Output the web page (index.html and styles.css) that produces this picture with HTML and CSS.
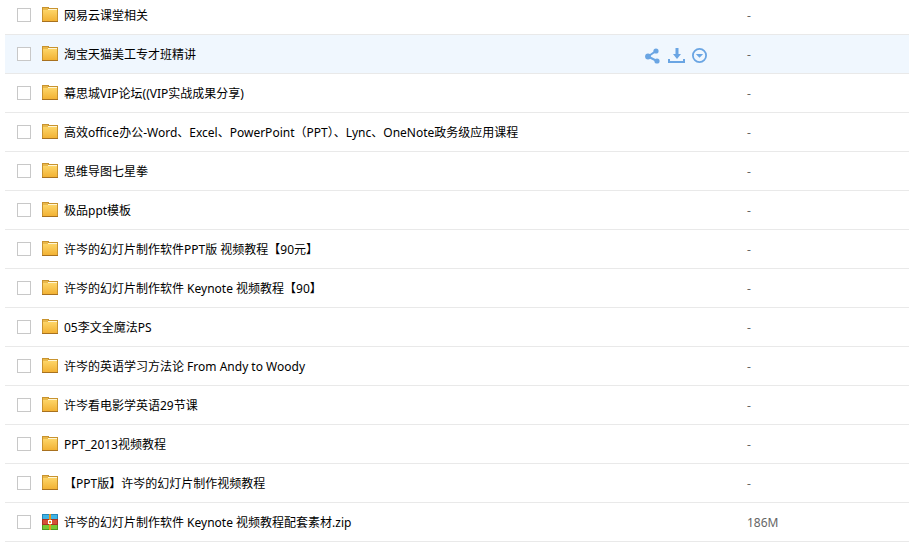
FILE: index.html
```html
<!DOCTYPE html>
<html lang="zh-CN">
<head>
<meta charset="utf-8">
<title>文件列表</title>
<link rel="stylesheet" href="styles.css">
</head>
<body>
<svg class="defs" aria-hidden="true">
  <defs>
    <linearGradient id="folder-fill" x1="0" y1="0" x2="0" y2="1">
      <stop offset="0" stop-color="#fdd567"/>
      <stop offset="1" stop-color="#f2b234"/>
    </linearGradient>
    <symbol id="folder" viewBox="0 0 16 16">
      <path d="M0 0H7V1H16V15H0Z" fill="#c8932f"/>
      <path d="M1 1H6V3H1Z" fill="#e9b84a"/>
      <path d="M6 2H15V3H6Z" fill="#fff6d4"/>
      <path d="M1 3H15V14H1Z" fill="url(#folder-fill)"/>
      <path d="M0 14H16V15H0Z" fill="#a8711f"/>
    </symbol>
    <symbol id="zip" viewBox="0 0 16 16">
      <path d="M0 0H16V5H0Z" fill="#2585b8"/>
      <path d="M1 1H15V5H1Z" fill="#3fb4e6"/>
      <path d="M0 5H16V11H0Z" fill="#a83420"/>
      <path d="M1 6H15V10H1Z" fill="#d64f35"/>
      <path d="M0 11H16V16H0Z" fill="#4e9a1c"/>
      <path d="M1 11H15V15H1Z" fill="#78c832"/>
      <path d="M7 0H9V16H7Z" fill="#e8961c"/>
      <path d="M6 6H10V10H6Z" fill="#fff"/>
      <path d="M7 7H9V9H7Z" fill="#e8961c"/>
    </symbol>
  </defs>
</svg>
<table class="files">
  <colgroup><col><col class="size-col"></colgroup>
  <tbody>
    <tr><td><div class="entry"><input type="checkbox" id="f1"><svg class="icon"><use href="#folder"/></svg><label for="f1">网易云课堂相关</label></div></td><td class="size">-</td></tr>
    <tr class="active"><td><div class="entry"><input type="checkbox" id="f2"><svg class="icon"><use href="#folder"/></svg><label for="f2">淘宝天猫美工专才班精讲</label>
      <div class="actions">
        <button type="button" aria-label="分享"><svg width="17" height="16" viewBox="0 0 17 16"><path d="M11 3L3 8.500L12 13" fill="none" stroke="#6aa5e3" stroke-width="2"/><g fill="#6aa5e3"><circle cx="11" cy="3" r="2.600"/><circle cx="3" cy="8.500" r="2.900"/><circle cx="12" cy="13" r="2.600"/></g></svg></button>
        <button type="button" aria-label="下载"><svg width="18" height="16" viewBox="0 0 18 16"><path d="M7.500 0H10.500V6H13L9 11L5 6H7.500Z" fill="#6aa5e3"/><path d="M1 11V14H16V11" fill="none" stroke="#6aa5e3" stroke-width="2"/></svg></button>
        <button type="button" aria-label="更多"><svg width="16" height="16" viewBox="0 0 16 16"><circle cx="7.500" cy="7.500" r="6.600" fill="none" stroke="#6aa5e3" stroke-width="1.800"/><path d="M3.800 6H11.200L7.500 9.700Z" fill="#6aa5e3"/></svg></button>
      </div></div></td><td class="size">-</td></tr>
    <tr><td><div class="entry"><input type="checkbox" id="f3"><svg class="icon"><use href="#folder"/></svg><label for="f3">幕思城VIP论坛((VIP实战成果分享)</label></div></td><td class="size">-</td></tr>
    <tr><td><div class="entry"><input type="checkbox" id="f4"><svg class="icon"><use href="#folder"/></svg><label for="f4">高效office办公-Word、Excel、PowerPoint（PPT）、Lync、OneNote政务级应用课程</label></div></td><td class="size">-</td></tr>
    <tr><td><div class="entry"><input type="checkbox" id="f5"><svg class="icon"><use href="#folder"/></svg><label for="f5">思维导图七星拳</label></div></td><td class="size">-</td></tr>
    <tr><td><div class="entry"><input type="checkbox" id="f6"><svg class="icon"><use href="#folder"/></svg><label for="f6">极品ppt模板</label></div></td><td class="size">-</td></tr>
    <tr><td><div class="entry"><input type="checkbox" id="f7"><svg class="icon"><use href="#folder"/></svg><label for="f7">许岑的幻灯片制作软件PPT版 视频教程【90元】</label></div></td><td class="size">-</td></tr>
    <tr><td><div class="entry"><input type="checkbox" id="f8"><svg class="icon"><use href="#folder"/></svg><label for="f8">许岑的幻灯片制作软件 Keynote 视频教程【90】</label></div></td><td class="size">-</td></tr>
    <tr><td><div class="entry"><input type="checkbox" id="f9"><svg class="icon"><use href="#folder"/></svg><label for="f9">05李文全魔法PS</label></div></td><td class="size">-</td></tr>
    <tr><td><div class="entry"><input type="checkbox" id="f10"><svg class="icon"><use href="#folder"/></svg><label for="f10">许岑的英语学习方法论 From Andy to Woody</label></div></td><td class="size">-</td></tr>
    <tr><td><div class="entry"><input type="checkbox" id="f11"><svg class="icon"><use href="#folder"/></svg><label for="f11">许岑看电影学英语29节课</label></div></td><td class="size">-</td></tr>
    <tr><td><div class="entry"><input type="checkbox" id="f12"><svg class="icon"><use href="#folder"/></svg><label for="f12">PPT_2013视频教程</label></div></td><td class="size">-</td></tr>
    <tr><td><div class="entry"><input type="checkbox" id="f13"><svg class="icon"><use href="#folder"/></svg><label for="f13">【PPT版】许岑的幻灯片制作视频教程</label></div></td><td class="size">-</td></tr>
    <tr><td><div class="entry"><input type="checkbox" id="f14"><svg class="icon"><use href="#zip"/></svg><label for="f14">许岑的幻灯片制作软件 Keynote 视频教程配套素材.zip</label></div></td><td class="size">186M</td></tr>
  </tbody>
</table>
</body>
</html>
```
FILE: styles.css
```css
body {
  margin: 0 0 0 5px;
  background: #fff;
  color: #000;
  font: 12px/18px "Noto Sans", "Noto Sans CJK SC", sans-serif;
  overflow: hidden;
}

.defs {
  position: absolute;
  width: 0;
  height: 0;
}

/* The list is scrolled a little, so the first row starts above the window. */
.files {
  width: 100%;
  margin-top: -4px;
  border-collapse: separate;
  border-spacing: 0;
  table-layout: fixed;
}

.size-col {
  width: 162px;
}

.files td {
  height: 38px;
  padding: 0;
  border-bottom: 1px solid #e9e9e9;
  vertical-align: middle;
}

.files .active td {
  background: #f0f7fe;
}

.entry {
  display: flex;
  align-items: center;
  padding: 0 39px 0 12px;
}

.entry input {
  appearance: none;
  flex: none;
  width: 14px;
  height: 14px;
  margin: 0 11px 0 0;
  border: 1px solid #c8c8c8;
  background: #fff;
}

.icon {
  flex: none;
  width: 16px;
  height: 16px;
  margin-right: 6px;
}

.entry label {
  padding-top: 2px;
  white-space: nowrap;
}

.actions {
  display: flex;
  align-items: center;
  gap: 6px;
  margin-left: auto;
  padding-top: 4px;
}

.actions button {
  padding: 0;
  border: 0;
  background: none;
  cursor: pointer;
}

.actions svg {
  display: block;
}

.files .size {
  height: 36px;
  padding-top: 2px;
  color: #666;
}
```
